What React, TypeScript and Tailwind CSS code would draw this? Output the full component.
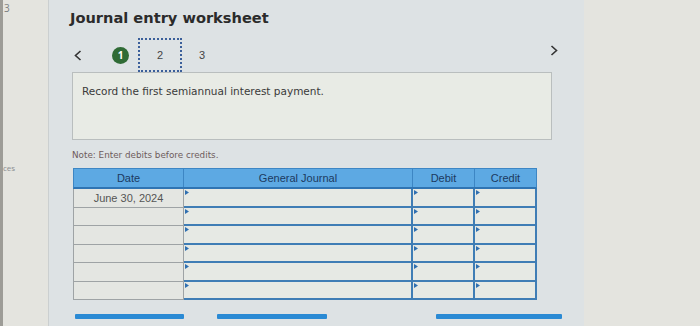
import React from 'react';

const rows = [0, 1, 2, 3, 4, 5];

function Arrow() {
    return (
        <svg width="4" height="5" viewBox="0 0 4 5" className="absolute left-[1px] top-[1px]">
            <path d="M0 0 L4 2.5 L0 5 Z" fill="#2f6fb0" />
        </svg>
    );
}

export default function App() {
    return (
        <div className="flex w-[700px] h-[326px] bg-[#e4e4df] overflow-hidden font-['Open_Sans',sans-serif]">
            {/* left edge of the page behind */}
            <div className="flex w-[48px] shrink-0">
                <div className="w-[3px] bg-[#9d9c97]" />
                <div className="flex-1 flex flex-col text-[8px] text-[#8a8d90]">
                    <div className="pt-[2px] pl-[1px] text-[10px] leading-[12px] text-[#7d7f80]">3</div>
                    <div className="h-[148px]" />
                    <div>ces</div>
                </div>
            </div>

            {/* worksheet panel */}
            <div className="w-[536px] shrink-0 bg-[#dde2e4] border-l border-[#cbcfd0] pl-[23px] flex flex-col">
                <div className="pt-[8px] font-['DejaVu_Sans',sans-serif] font-bold text-[14.6px] leading-[20px] text-[#2b2b2b] -ml-[2px]">
                    Journal entry worksheet
                </div>

                <div className="flex items-center h-[34px] mt-[10px] w-[490px]">
                    <svg width="8" height="11" viewBox="0 0 8 11" className="ml-[2px]">
                        <path d="M6.5 1 L1.5 5.5 L6.5 10" fill="none" stroke="#333" strokeWidth="1.6" />
                    </svg>
                    <div className="ml-[30px] w-[17px] h-[17px] rounded-full bg-[#2f6b35] text-white text-[10px] font-bold flex items-center justify-center">
                        1
                    </div>
                    <div className="ml-[9px] w-[44px] h-[34px] border-2 border-dotted border-[#3b5f9a] flex items-center justify-center text-[11px] text-[#444] font-['Liberation_Sans',sans-serif]">
                        2
                    </div>
                    <div className="ml-[17px] text-[11px] text-[#444] font-['Liberation_Sans',sans-serif]">3</div>
                    <div className="flex-1" />
                    <svg width="8" height="11" viewBox="0 0 8 11" className="mr-[4px] -mt-[10px]">
                        <path d="M1.5 1 L6.5 5.5 L1.5 10" fill="none" stroke="#333" strokeWidth="1.6" />
                    </svg>
                </div>

                <div className="w-[480px] h-[68px] bg-[#e8ebe5] border border-[#b9bebe] pl-[9px] pt-[11px] text-[10.5px] text-[#3a3a3a] font-['DejaVu_Sans',sans-serif]">
                    Record the first semiannual interest payment.
                </div>

                <div className="mt-[9px] text-[8.8px] text-[#6e5c5c] font-['DejaVu_Sans',sans-serif]">
                    Note: Enter debits before credits.
                </div>

                <div className="mt-[6px] ml-[1px] w-[464px] font-['Liberation_Sans',sans-serif] text-[11px]">
                    <div className="flex h-[21px] bg-[#5da9e3] border border-[#3d86c4] border-b-2 border-b-[#2f74b3] text-[#1c3a60]">
                        <div className="w-[110px] flex items-center justify-center border-r border-[#3d86c4]">Date</div>
                        <div className="w-[229px] flex items-center justify-center border-r border-[#3d86c4]">General Journal</div>
                        <div className="w-[62px] flex items-center justify-center border-r border-[#3d86c4]">Debit</div>
                        <div className="flex-1 flex items-center justify-center">Credit</div>
                    </div>
                    {rows.map((r) => (
                        <div key={r} className="flex h-[18.5px]">
                            <div className="w-[111px] border-l border-r border-b border-[#9ea3a5] bg-[#e4e6e2] flex items-center justify-center text-[#555]">
                                {r === 0 ? 'June 30, 2024' : ''}
                            </div>
                            <div className="relative w-[229px] border-r-2 border-b-2 border-[#3f7db5] bg-[#e6e9e4]">
                                <Arrow />
                            </div>
                            <div className="relative w-[62px] border-r-2 border-b-2 border-[#3f7db5] bg-[#e6e9e4]">
                                <Arrow />
                            </div>
                            <div className="relative flex-1 border-r-2 border-b-2 border-[#3f7db5] bg-[#e6e9e4]">
                                <Arrow />
                            </div>
                        </div>
                    ))}
                </div>

                <div className="mt-[14px] flex">
                    <div className="ml-[3px] w-[109px] h-[5px] bg-[#2a8ad4] rounded-[1px]" />
                    <div className="ml-[33px] w-[110px] h-[5px] bg-[#2a8ad4] rounded-[1px]" />
                    <div className="ml-[109px] w-[126px] h-[5px] bg-[#2a8ad4] rounded-[1px]" />
                </div>
            </div>

            <div className="flex-1" />
        </div>
    );
}
